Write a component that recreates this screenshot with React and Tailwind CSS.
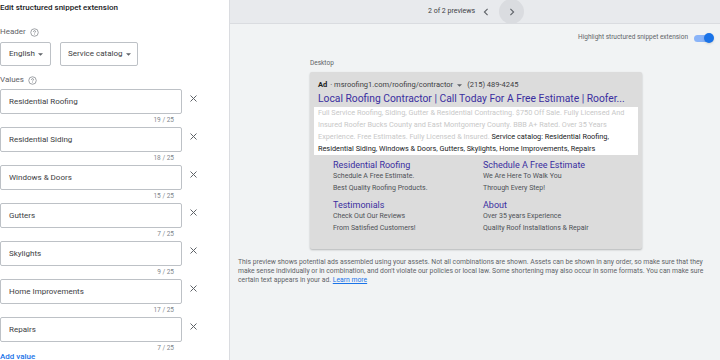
import React from 'react';

const values = [
  { text: 'Residential Roofing', count: '19 / 25' },
  { text: 'Residential Siding', count: '18 / 25' },
  { text: 'Windows & Doors', count: '15 / 25' },
  { text: 'Gutters', count: '7 / 25' },
  { text: 'Skylights', count: '9 / 25' },
  { text: 'Home Improvements', count: '17 / 25' },
  { text: 'Repairs', count: '7 / 25' },
];

const sitelinks = [
  { title: 'Residential Roofing', lines: ['Schedule A Free Estimate.', 'Best Quality Roofing Products.'] },
  { title: 'Schedule A Free Estimate', lines: ['We Are Here To Walk You', 'Through Every Step!'] },
  { title: 'Testimonials', lines: ['Check Out Our Reviews', 'From Satisfied Customers!'] },
  { title: 'About', lines: ['Over 35 years Experience', 'Quality Roof Installations & Repair'] },
];

function HelpIcon() {
  return (
    <svg width="9" height="9" viewBox="0 0 24 24" className="ml-[4px]">
      <circle cx="12" cy="12" r="10" fill="none" stroke="#80868b" strokeWidth="2" />
      <path d="M9.5 9.5a2.6 2.6 0 1 1 3.6 2.4c-.8.4-1.1.9-1.1 1.8" fill="none" stroke="#80868b" strokeWidth="2" strokeLinecap="round" />
      <circle cx="12" cy="17" r="1.2" fill="#80868b" />
    </svg>
  );
}

function Caret() {
  return (
    <svg width="5" height="3" viewBox="0 0 10 5" className="ml-auto shrink-0">
      <path d="M0 0l5 5 5-5z" fill="#5f6368" />
    </svg>
  );
}

function CloseIcon() {
  return (
    <svg width="7" height="7" viewBox="0 0 14 14">
      <path d="M1 1l12 12M13 1L1 13" stroke="#5f6368" strokeWidth="2" />
    </svg>
  );
}

const App = () => {
  return (
    <div className="flex w-[720px] h-[360px] overflow-hidden bg-white text-[#3c4043]" style={{ fontFamily: 'Roboto, "Liberation Sans", sans-serif' }}>
      {/* left editor */}
      <div className="w-[230px] shrink-0 border-r border-[#dadce0] bg-white">
        <div className="h-[16px] pt-[3px] text-[8px] font-medium text-[#202124] leading-[10px]">Edit structured snippet extension</div>
        <div className="flex items-center mt-[11px] text-[8px] text-[#5f6368] leading-[10px]">
          Header <HelpIcon />
        </div>
        <div className="flex gap-[9px] mt-[5px]">
          <div className="flex items-center w-[51px] h-[24px] border border-[#bdc1c6] rounded-[2px] pl-[8px] pr-[7px] text-[8px] text-[#3c4043] whitespace-nowrap">
            English <Caret />
          </div>
          <div className="flex items-center w-[78px] h-[24px] border border-[#bdc1c6] rounded-[2px] pl-[7px] pr-[6px] text-[8px] text-[#3c4043] whitespace-nowrap">
            Service catalog <Caret />
          </div>
        </div>
        <div className="flex items-center mt-[9px] text-[8px] text-[#5f6368] leading-[10px]">
          Values <HelpIcon />
        </div>
        <div className="mt-[4px] flex flex-col">
          {values.map((v) => (
            <div key={v.text} className="flex h-[38px]">
              <div className="w-[182px]">
                <div className="flex items-center h-[25px] border border-[#bdc1c6] rounded-[2px] pl-[8px] text-[8px] text-[#3c4043]">
                  {v.text}
                </div>
                <div className="text-right pr-[8px] text-[6.5px] text-[#80868b] leading-[12px]">{v.count}</div>
              </div>
              <div className="ml-[8px] pt-[6px]">
                <CloseIcon />
              </div>
            </div>
          ))}
        </div>
        <div className="text-[8px] font-medium text-[#1a73e8] leading-[10px] mt-[-3px]">Add value</div>
      </div>

      {/* right preview */}
      <div className="flex-1 bg-[#f1f3f4] flex flex-col">
        <div className="h-[24px] bg-[#e8eaed] border-b border-[#dadce0] flex items-center pl-[198px] text-[7px] text-[#3c4043] whitespace-nowrap">
          <span className="w-[46px] shrink-0">2 of 2 previews</span>
          <span className="w-[24px] h-[24px] flex items-center justify-center">
            <svg width="6" height="8" viewBox="0 0 6 10"><path d="M5 1L1 5l4 4" fill="none" stroke="#5f6368" strokeWidth="1.4" /></svg>
          </span>
          <span className="ml-[1px] w-[25px] h-[25px] rounded-full bg-[#dadce0] flex items-center justify-center">
            <svg width="6" height="8" viewBox="0 0 6 10"><path d="M1 1l4 4-4 4" fill="none" stroke="#5f6368" strokeWidth="1.4" /></svg>
          </span>
        </div>
        <div className="flex items-center justify-end pr-[6px] mt-[9px] text-[6.5px] text-[#5f6368]">
          Highlight structured snippet extension
          <div className="relative ml-[6px] w-[20px] h-[10px] flex items-center">
            <div className="w-[17px] h-[7px] rounded-full bg-[#8ab4f8]" />
            <div className="absolute right-0 w-[10px] h-[10px] rounded-full bg-[#1a73e8] shadow-sm" />
          </div>
        </div>
        <div className="ml-[80px] mt-[16px] text-[6.5px] text-[#5f6368] leading-[8px]">Desktop</div>
        <div className="ml-[80px] mt-[5px] w-[332px] bg-[#dcdcdc] shadow-[0_1px_2px_rgba(0,0,0,0.25)] rounded-[2px] pt-[8px] pb-[15px]">
          <div className="px-[8px] flex items-center text-[7.5px] text-[#3c4043] leading-[10px]">
            <span className="font-bold text-[#202124]">Ad</span>
            <span className="ml-[3px]">· msroofing1.com/roofing/contractor</span>
            <svg width="5" height="3" viewBox="0 0 10 5" className="ml-[4px]"><path d="M0 0l5 5 5-5z" fill="#5f6368" /></svg>
            <span className="ml-[5px]">(215) 489-4245</span>
          </div>
          <div className="px-[8px] mt-[2px] text-[10.3px] text-[#3a2ea0] leading-[14px] whitespace-nowrap">
            Local Roofing Contractor | Call Today For A Free Estimate | Roofer...
          </div>
          <div className="mx-[4px] mt-[1px] bg-white px-[4px] py-0 text-[7.3px] leading-[12px]">
            <span className="text-[#c8c8c8]">
              Full Service Roofing, Siding, Gutter &amp; Residential Contracting. $750 Off Sale. Fully Licensed And Insured Roofer Bucks County and East Montgomery County. BBB A+ Rated. Over 35 Years Experience. Free Estimates. Fully Licensed &amp; Insured.
            </span>{' '}
            <span className="text-[#202124]">
              Service catalog: Residential Roofing, Residential Siding, Windows &amp; Doors, Gutters, Skylights, Home Improvements, Repairs
            </span>
          </div>
          <div className="grid grid-cols-[150px_1fr] gap-y-[5px] pl-[23px] mt-[4px]">
            {sitelinks.map((s) => (
              <div key={s.title}>
                <div className="text-[9px] text-[#3a2ea0] leading-[12px]">{s.title}</div>
                {s.lines.map((l) => (
                  <div key={l} className="text-[7px] text-[#4d5156] leading-[11.5px]">{l}</div>
                ))}
              </div>
            ))}
          </div>
        </div>
        <div className="px-[8px] mt-[9px] text-[6.8px] text-[#5f6368] leading-[9px]">
          This preview shows potential ads assembled using your assets. Not all combinations are shown. Assets can be shown in any order, so make sure that they make sense individually or in combination, and don't violate our policies or local law. Some shortening may also occur in some formats. You can make sure certain text appears in your ad.{' '}
          <span className="text-[#1a73e8] underline">Learn more</span>
        </div>
      </div>
    </div>
  );
};

export default App;
